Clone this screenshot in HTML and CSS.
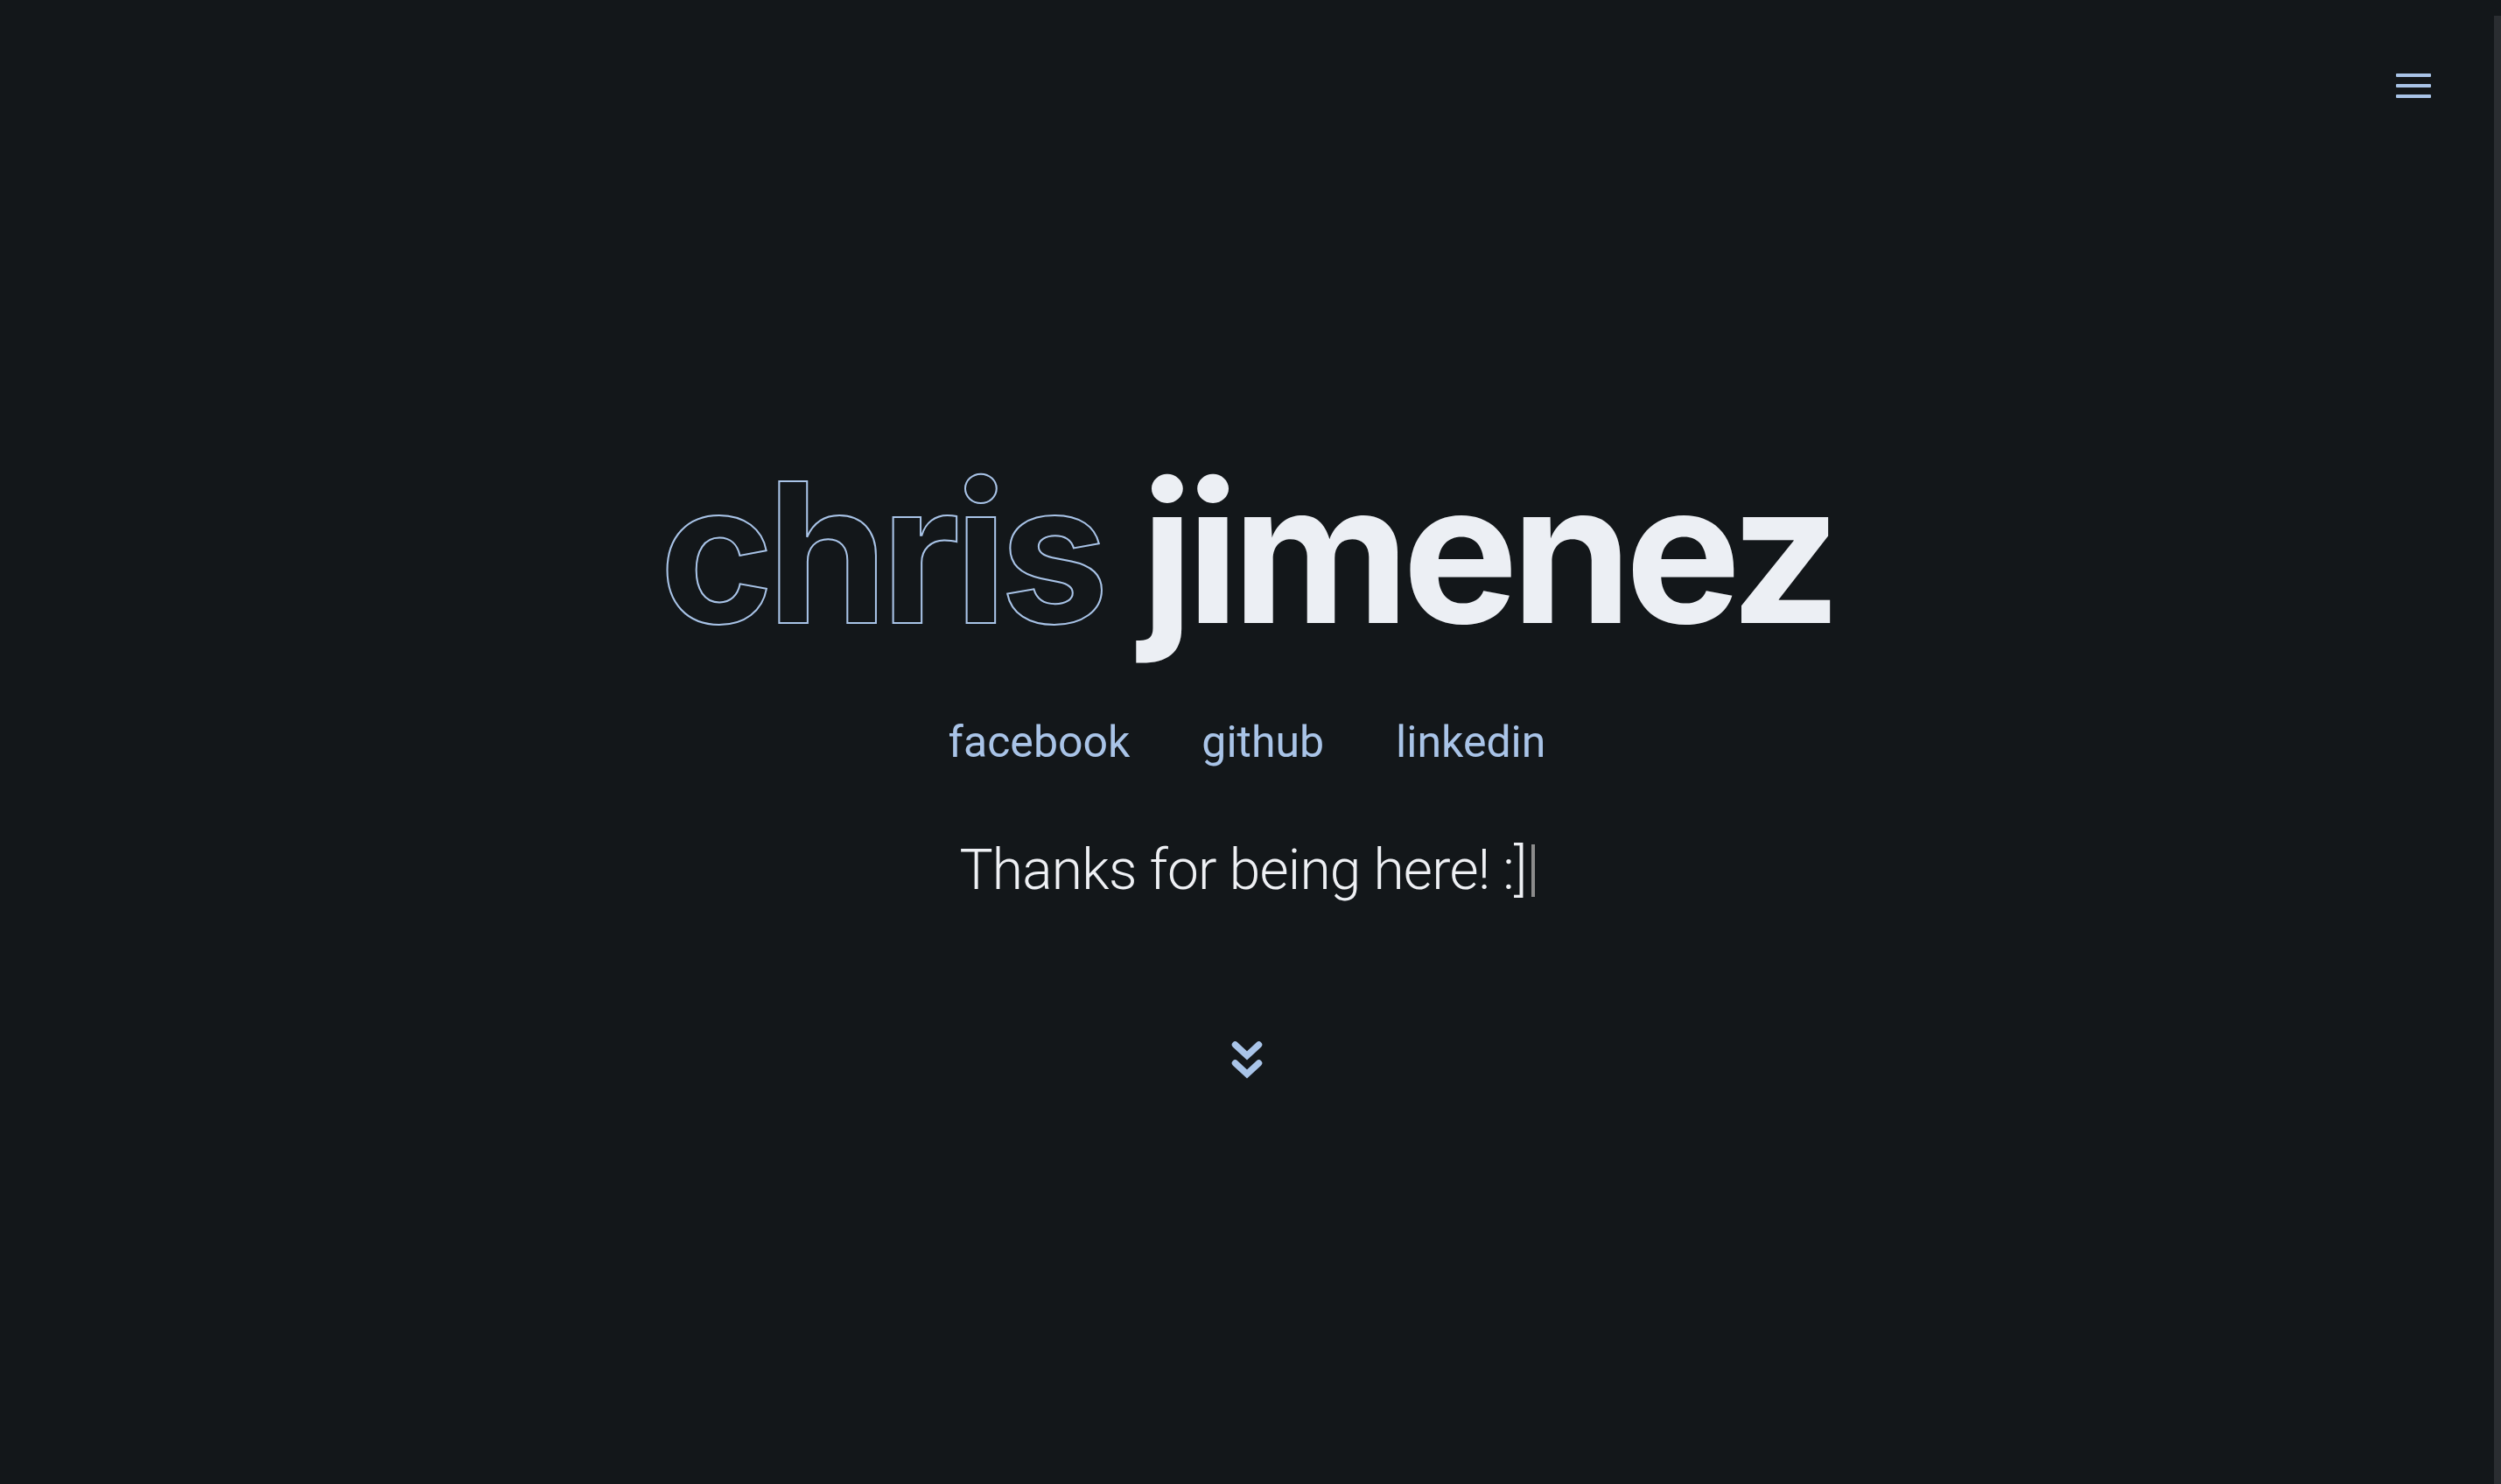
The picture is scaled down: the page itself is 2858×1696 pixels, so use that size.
FILE: index.html
```html
<!DOCTYPE html>
<html lang="en">
<head>
<meta charset="utf-8">
<title>chris jimenez</title>
<link rel="stylesheet" href="styles.css">
</head>
<body>
<div class="page">
  <button class="menu" aria-label="menu">
    <span class="menu-line"></span>
    <span class="menu-line"></span>
    <span class="menu-line"></span>
  </button>
  <main class="hero">
    <h1 class="title"><span class="first">chris</span> <span class="last">jimenez</span></h1>
    <nav class="links">
      <a href="#" class="link">facebook</a>
      <a href="#" class="link">github</a>
      <a href="#" class="link">linkedin</a>
    </nav>
    <p class="tagline">Thanks for being here! :]<span class="cursor"></span></p>
    <a href="#" class="down" aria-label="scroll down">
      <svg width="36" height="44" viewBox="0 0 36 44"><path d="M4.5 5 L18 17.5 L31.5 5 M4.5 26 L18 38.5 L31.5 26" fill="none" stroke="#a9c4e8" stroke-width="7.5" stroke-linecap="round" stroke-linejoin="miter"/></svg>
    </a>
  </main>
  <div class="scrollbar"></div>
</div>
</body>
</html>
```
FILE: styles.css
```css
html, body {
  margin: 0;
  padding: 0;
  background: #13171a;
  height: 100%;
  overflow: hidden;
}
.page {
  position: relative;
  height: 1696px;
  width: 2850px;
}
.menu {
  position: absolute;
  top: 84px;
  left: 2738px;
  width: 40px;
  padding: 0;
  border: 0;
  background: none;
  display: flex;
  flex-direction: column;
  gap: 8px;
}
.menu-line {
  display: block;
  height: 4px;
  width: 40px;
  background: #a9c4e8;
  border-radius: 1px;
}
.hero {
  display: flex;
  flex-direction: column;
  align-items: center;
  padding-top: 521px;
}
.title {
  margin: 0;
  font-family: Inter, "Liberation Sans", sans-serif;
  font-weight: 700;
  font-size: 222px;
  line-height: 222px;
  letter-spacing: -0.036em;
  white-space: nowrap;
}
.first {
  color: transparent;
  -webkit-text-stroke: 2px #a9c4e8;
}
.last {
  color: #eceff4;
}
.links {
  margin-top: 75px;
  display: flex;
  gap: 82px;
  font-family: Roboto, "Liberation Sans", sans-serif;
  font-size: 50px;
  line-height: 60px;
}
.link {
  color: #a9c4e8;
  text-decoration: none;
}
.tagline {
  margin: 82px 0 0;
  font-family: Roboto, "Liberation Sans", sans-serif;
  font-weight: 300;
  font-size: 64px;
  line-height: 70px;
  letter-spacing: -0.75px;
  color: #eef0f4;
  display: flex;
  align-items: center;
}
.cursor {
  display: inline-block;
  width: 4px;
  height: 60px;
  margin-left: 5px;
  background: #8c8c8c;
}
.down {
  margin-top: 159px;
  display: block;
  line-height: 0;
}
.scrollbar {
  position: absolute;
  top: 18px;
  left: 2850px;
  width: 8px;
  height: 1678px;
  background: #2a2d31;
}
```
